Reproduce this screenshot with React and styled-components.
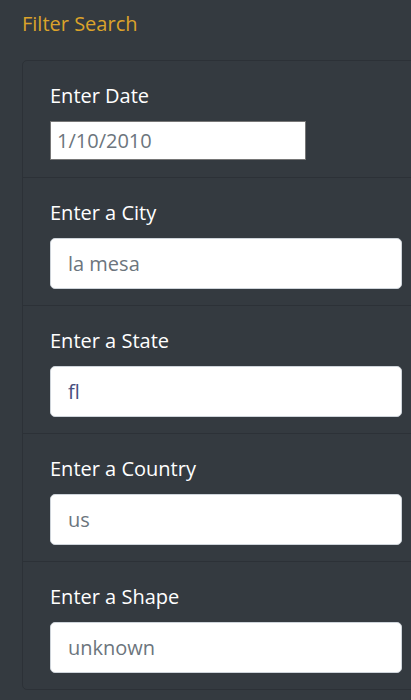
import React, { useState } from 'react'
import styled, { createGlobalStyle } from 'styled-components'

const GlobalStyle = createGlobalStyle`
  html, body {
    margin: 0;
    padding: 0;
    background-color: #343a40;
    overflow: hidden;
  }
  * {
    box-sizing: border-box;
  }
`

const Page = styled.div`
  font-family: "Open Sans", "Noto Sans", sans-serif;
  padding: 8px 0 0 22px;
  width: 430px;
`

const Title = styled.h5`
  margin: 0 0 20px;
  font-size: 20px;
  font-weight: 400;
  line-height: 32px;
  color: #dca32a;
`

const FilterList = styled.ul`
  list-style: none;
  margin: 0;
  padding: 0;
  border: 1px solid rgba(0, 0, 0, 0.14);
  border-radius: 5px;
`

const FilterItem = styled.li`
  padding: 20px 27px 16px;
  border-top: 1px solid rgba(0, 0, 0, 0.14);

  &:first-child {
    border-top: none;
    padding-bottom: 17px;
  }
`

const Label = styled.label`
  display: block;
  margin-bottom: 10px;
  font-size: 20px;
  line-height: 30px;
  color: #fff;
`

const DateInput = styled.input`
  display: block;
  width: 256px;
  height: 39px;
  padding: 0 6px;
  border: 1px solid #767676;
  border-radius: 0;
  background: #fff;
  font-family: inherit;
  font-size: 20px;
  color: #6c757d;
  outline: none;

  &::placeholder {
    color: #6c757d;
  }
`

const TextInput = styled.input`
  display: block;
  width: 352px;
  height: 51px;
  padding: 0 17px;
  border: 1px solid #ced4da;
  border-radius: 5px;
  background: #fff;
  font-family: inherit;
  font-size: 20px;
  color: #474f80;
  outline: none;

  &::placeholder {
    color: #6c757d;
  }
`

const fields = [
  { id: 'city', label: 'Enter a City', placeholder: 'la mesa' },
  { id: 'state', label: 'Enter a State', placeholder: 'fl', value: 'fl' },
  { id: 'country', label: 'Enter a Country', placeholder: 'us' },
  { id: 'shape', label: 'Enter a Shape', placeholder: 'unknown' },
]

const App = () => {
  const [values, setValues] = useState(
    fields.reduce((acc, f) => ({ ...acc, [f.id]: f.value || '' }), {})
  )

  const handleChange = (e) => {
    const { id, value } = e.target
    setValues(prev => ({ ...prev, [id]: value }))
  }

  return (
    <>
      <GlobalStyle />
      <Page>
        <Title>Filter Search</Title>
        <FilterList>
          <FilterItem>
            <Label htmlFor="datetime">Enter Date</Label>
            <DateInput id="datetime" type="text" placeholder="1/10/2010" />
          </FilterItem>
          {fields.map(f => (
            <FilterItem key={f.id}>
              <Label htmlFor={f.id}>{f.label}</Label>
              <TextInput
                id={f.id}
                type="text"
                placeholder={f.placeholder}
                value={values[f.id]}
                onChange={handleChange}
              />
            </FilterItem>
          ))}
        </FilterList>
      </Page>
    </>
  )
}

export default App
